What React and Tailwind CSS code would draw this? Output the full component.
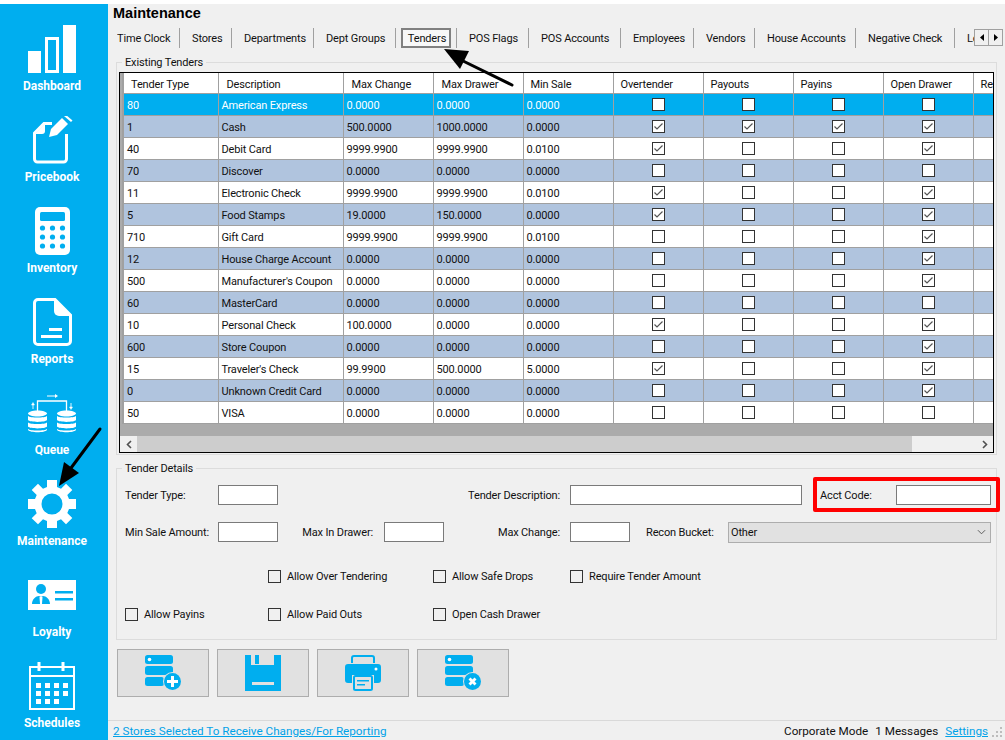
import React from "react";

const tabs = [
  { label: "Time Clock", w: "w-[63px]", pl: "pl-[0px]" },
  { label: "Stores", w: "w-[52px]", pl: "pl-[12px]" },
  { label: "Departments", w: "w-[82px]", pl: "pl-[12px]" },
  { label: "Dept Groups", w: "w-[82px]", pl: "pl-[12px]" },
  { label: "Tenders", w: "w-[61px]", active: true },
  { label: "POS Flags", w: "w-[72px]", pl: "pl-[12px]" },
  { label: "POS Accounts", w: "w-[92px]", pl: "pl-[12px]" },
  { label: "Employees", w: "w-[73px]", pl: "pl-[12px]" },
  { label: "Vendors", w: "w-[61px]", pl: "pl-[12px]" },
  { label: "House Accounts", w: "w-[101px]", pl: "pl-[12px]" },
  { label: "Negative Check", w: "w-[99px]", pl: "pl-[12px]" },
  { label: "Loyalty", w: "w-[50px]", pl: "pl-[12px]", last: true },
];

// type, description, max change, max drawer, min sale, overtender, payouts, payins, open drawer
const rows = [
  ["80", "American Express", "0.0000", "0.0000", "0.0000", 0, 0, 0, 0],
  ["1", "Cash", "500.0000", "1000.0000", "0.0000", 1, 1, 1, 1],
  ["40", "Debit Card", "9999.9900", "9999.9900", "0.0100", 1, 0, 0, 1],
  ["70", "Discover", "0.0000", "0.0000", "0.0000", 0, 0, 0, 0],
  ["11", "Electronic Check", "9999.9900", "9999.9900", "0.0100", 1, 0, 0, 1],
  ["5", "Food Stamps", "19.0000", "150.0000", "0.0000", 1, 0, 0, 1],
  ["710", "Gift Card", "9999.9900", "9999.9900", "0.0100", 0, 0, 0, 1],
  ["12", "House Charge Account", "0.0000", "0.0000", "0.0000", 0, 0, 0, 1],
  ["500", "Manufacturer's Coupon", "0.0000", "0.0000", "0.0000", 0, 0, 0, 1],
  ["60", "MasterCard", "0.0000", "0.0000", "0.0000", 0, 0, 0, 0],
  ["10", "Personal Check", "100.0000", "0.0000", "0.0000", 1, 0, 0, 1],
  ["600", "Store Coupon", "0.0000", "0.0000", "0.0000", 0, 0, 0, 1],
  ["15", "Traveler's Check", "99.9900", "500.0000", "5.0000", 1, 0, 0, 1],
  ["0", "Unknown Credit Card", "0.0000", "0.0000", "0.0000", 0, 0, 0, 1],
  ["50", "VISA", "0.0000", "0.0000", "0.0000", 0, 0, 0, 0],
];

const headers = [
  { label: "Tender Type", w: "w-[95px]", pl: "pl-[7px]" },
  { label: "Description", w: "w-[125px]", pl: "pl-[8px]" },
  { label: "Max Change", w: "w-[90px]", pl: "pl-[8px]" },
  { label: "Max Drawer", w: "w-[90px]", pl: "pl-[8px]" },
  { label: "Min Sale", w: "w-[90px]", pl: "pl-[7px]" },
  { label: "Overtender", w: "w-[90px]", pl: "pl-[7px]" },
  { label: "Payouts", w: "w-[90px]", pl: "pl-[7px]" },
  { label: "Payins", w: "w-[90px]", pl: "pl-[7px]" },
  { label: "Open Drawer", w: "w-[90px]", pl: "pl-[7px]" },
  { label: "Re", w: "w-[90px]", pl: "pl-[7px]" },
];

const DashboardIcon = () => (
  <svg viewBox="0 0 48 48" className="w-12 h-12" fill="#fff">
    <rect x="0" y="26" width="13" height="22" />
    <path fillRule="evenodd" d="M17 12h14v36H17z M20 15v30h8V15z" />
    <rect x="35" y="0" width="13" height="48" />
  </svg>
);

const PricebookIcon = () => (
  <svg viewBox="0 0 48 48" className="w-12 h-12" fill="none">
    <path d="M24 7.500H16L6.500 17v26a3 3 0 0 0 3 3h26a3 3 0 0 0 3-3V18" stroke="#fff" strokeWidth="3" />
    <path d="M7 18h7a3 3 0 0 0 3-3V8z" fill="#fff" />
    <path d="M21 21l2-8 11-11 6 6-11 11z" fill="#fff" />
    <path d="M36 0l1.500-1.500 7 6L43 6z" fill="#fff" />
  </svg>
);

const InventoryIcon = () => (
  <svg viewBox="0 0 48 48" className="w-12 h-12" fill="#fff">
    <rect x="7" y="0" width="35" height="48" rx="5" />
    <rect x="12" y="5" width="25" height="9" rx="1.5" fill="#00aeef" />
    {[21, 30, 39].map((y) =>
      [14.5, 24.5, 34.5].map((x) => <circle key={x + "-" + y} cx={x} cy={y} r="2.6" fill="#00aeef" />)
    )}
  </svg>
);

const ReportsIcon = () => (
  <svg viewBox="0 0 48 48" className="w-12 h-12" fill="none">
    <path d="M10 1.500h17l15.500 15.500V43a3.500 3.500 0 0 1-3.500 3.500H10A3.500 3.500 0 0 1 6.500 43V5A3.500 3.500 0 0 1 10 1.500z" stroke="#fff" strokeWidth="3" />
    <path d="M26 1l17 17H31a5 5 0 0 1-5-5z" fill="#fff" />
    <path d="M21 30h13v3H21zM13 37h21v3H13z" fill="#fff" />
  </svg>
);

const QueueIcon = () => (
  <svg viewBox="0 0 48 48" className="w-12 h-12" fill="none">
    <path d="M9.500 24V12h29v12" stroke="#fff" strokeWidth="1.300" />
    <path d="M19 7h8" stroke="#fff" strokeWidth="1" />
    <path d="M27 5l3 2-3 2z" fill="#fff" />
    <path d="M5 20v-4l-1.500 0 1.500-2.500 1.500 2.500-1.500 0zM43 14v4l1.500 0-1.500 2.500-1.500-2.500 1.500 0z" fill="#fff" stroke="#fff" strokeWidth="0.5" />
    {[9.5, 38.5].map((cx) => (
      <g key={cx} fill="#fff">
        <path d={`M${cx - 9.500} 24.500c0-1.500 4-3 9.500-3s9.500 1.500 9.500 3-4 3-9.500 3-9.500-1.500-9.500-3z`} />
        <path d={`M${cx - 9.500} 27c2 2 17 2 19 0v4c-2 2.500-17 2.500-19 0z`} />
        <path d={`M${cx - 9.500} 33.500c2 2 17 2 19 0v4c-2 2.500-17 2.500-19 0z`} />
        <path d={`M${cx - 9.500} 40c2 2 17 2 19 0v1c-2 3-17 3-19 0z`} />
      </g>
    ))}
  </svg>
);

const GearIcon = () => (
  <svg viewBox="0 0 48 48" className="w-12 h-12" fill="#fff">
    <path
      fillRule="evenodd"
      d="M19 0h10v7l4 1.700 5-5 6.300 6.300-5 5 1.700 4h7v10h-7l-1.700 4 5 5-6.300 6.300-5-5-4 1.700v7H19v-7l-4-1.700-5 5L3.700 38.200l5-5L7 29H0V19h7l1.700-4-5-5L10 3.700l5 5 4-1.700z M24 13.500a10.500 10.500 0 1 0 0 21a10.500 10.500 0 1 0 0-21z"
    />
  </svg>
);

const LoyaltyIcon = () => (
  <svg viewBox="0 0 48 48" className="w-12 h-12">
    <rect x="0" y="9" width="48" height="30" fill="#fff" />
    <circle cx="13" cy="18" r="5" fill="#00aeef" />
    <path d="M4 33c0-5 4-8 7-8l2 1 2-1c3 0 7 3 7 8z" fill="#00aeef" />
    <path d="M11.500 26h3l-.5 7h-2z" fill="#fff" />
    <path d="M27 20h18v2.500H27zM27 27h18v2.500H27z" fill="#00aeef" />
  </svg>
);

const SchedulesIcon = () => (
  <svg viewBox="0 0 48 48" className="w-12 h-12" fill="none">
    <rect x="2" y="5" width="44" height="42" stroke="#fff" strokeWidth="2" />
    <path d="M2 14h44" stroke="#fff" strokeWidth="2" />
    <path d="M11 0v9M35 0v9" stroke="#fff" strokeWidth="3" />
    {[21, 29, 37].map((y, r) =>
      [8, 17, 26, 35].slice(0, r === 2 ? 3 : 4).map((x) => <rect key={x + "-" + y} x={x} y={y} width="5" height="5" fill="#fff" />)
    )}
  </svg>
);

const nav = [
  ["Dashboard", DashboardIcon],
  ["Pricebook", PricebookIcon],
  ["Inventory", InventoryIcon],
  ["Reports", ReportsIcon],
  ["Queue", QueueIcon],
  ["Maintenance", GearIcon],
  ["Loyalty", LoyaltyIcon],
  ["Schedules", SchedulesIcon],
];

function CheckBox({ checked, box = "border-[#333] bg-white" }) {
  return (
    <span className={`inline-flex w-[13px] h-[13px] border ${box} items-center justify-center`}>
      {checked ? (
        <svg viewBox="0 0 11 11" className="w-[11px] h-[11px]" fill="none">
          <path d="M1.500 5.500l2.500 2.500 5.500-5.500" stroke="#555" strokeWidth="1.200" />
        </svg>
      ) : null}
    </span>
  );
}

function FormCheck({ label, w }) {
  return (
    <label className={`${w} flex items-center gap-[6px] shrink-0`}>
      <CheckBox box="border-[#333] bg-transparent" />
      <span className="whitespace-nowrap pt-[2px]">{label}</span>
    </label>
  );
}

function TextBox({ w }) {
  return <div className={`${w} h-[20px] bg-white border border-[#7a7a7a] shrink-0`} />;
}

function ToolButton({ children }) {
  return (
    <button className="w-[92px] h-[48px] bg-[#e1e1e1] border border-[#adadad] flex items-center justify-center">
      {children}
    </button>
  );
}

export default function App() {
  return (
    <div className="[font-family:Roboto,sans-serif] w-[1005px] h-[740px] overflow-hidden bg-white text-[11px] tracking-[-0.15px] text-[#111] relative">
      <div className="h-[4px] bg-white" />
      <div className="flex h-[736px]">
        {/* Side nav */}
        <nav className="w-[108px] shrink-0 bg-[#00aeef] pr-[4px] flex flex-col items-center">
          {nav.map(([label, Icon]) => (
            <div key={label} className="h-[91px] shrink-0 pt-[21px] flex flex-col items-center">
              <Icon />
              <span className="mt-[5px] h-[16px] leading-[16px] text-[12px] tracking-normal font-bold text-white whitespace-nowrap">{label}</span>
            </div>
          ))}
        </nav>

        <main className="flex-1 min-w-0 bg-[#f0f0f0] flex flex-col">
          <h1 className="[font-family:Liberation_Sans,sans-serif] h-[18px] leading-[18px] pl-[5px] text-[14.5px] tracking-normal font-bold text-black">Maintenance</h1>

          {/* Tabs */}
          <div className="relative mt-[6px] ml-[9px] h-[20px] overflow-hidden flex">
            {tabs.map((t) => (
              <div
                key={t.label}
                className={
                  t.active
                    ? `${t.w} shrink-0 flex`
                    : `${t.w} ${t.pl} shrink-0 whitespace-nowrap leading-[22px] ${t.last ? "" : "border-r border-[#a0a0a0]"}`
                }
              >
                {t.active ? (
                  <>
                    <span className="ml-[5px] w-[50px] h-[20px] pl-[2px] text-center leading-[18px] border-2 border-[#808080] bg-[#f8f8f8]">
                      {t.label}
                    </span>
                    <span className="ml-auto border-r border-[#a0a0a0]" />
                  </>
                ) : (
                  t.label
                )}
              </div>
            ))}
            <div className="absolute right-[2px] top-[1px] h-[17px] w-[29px] flex border border-[#a0a0a0] bg-[#f0f0f0]">
              <span className="flex-1 flex items-center justify-center border-r border-[#a0a0a0]">
                <svg viewBox="0 0 4 7" className="w-[4px] h-[7px]"><path d="M4 0v7L0 3.500z" fill="#000" /></svg>
              </span>
              <span className="flex-1 flex items-center justify-center">
                <svg viewBox="0 0 4 7" className="w-[4px] h-[7px]"><path d="M0 0v7l4-3.500z" fill="#000" /></svg>
              </span>
            </div>
          </div>

          {/* Existing Tenders */}
          <fieldset className="mt-[6px] ml-[8px] w-[881px] h-[401px] border border-[#dcdcdc] px-[2px] min-w-0">
            <legend className="ml-[3px] px-[3px] leading-[18px] h-[16px]">Existing Tenders</legend>
            <div className="mt-[2px] h-[381px] border border-black bg-[#ababab] flex flex-col overflow-hidden">
              <div className="flex-1 overflow-hidden pl-[2px]">
                <table className="table-fixed border-collapse w-[940px] border-l-2 border-[#a0a0a0]">
                  <colgroup>
                    {headers.map((h) => <col key={h.label} className={h.w} />)}
                  </colgroup>
                  <thead>
                    <tr className="h-[20px] bg-white">
                      {headers.map((h) => (
                        <th key={h.label} className={`${h.pl} font-normal text-left whitespace-nowrap overflow-hidden border-r border-b border-[#a0a0a0] p-0 pt-[4px] leading-[15px]`}>
                          {h.label}
                        </th>
                      ))}
                    </tr>
                  </thead>
                  <tbody>
                    {rows.map((r, i) => {
                      const rowBg = i === 0 ? "bg-[#00aeef] text-white" : i % 2 ? "bg-[#b0c4de]" : "bg-white";
                      return (
                        <tr key={r[0]} className={`h-[22px] ${rowBg}`}>
                          {r.slice(0, 5).map((v, c) => (
                            <td key={c} className="whitespace-nowrap overflow-hidden border-r border-b border-[#a0a0a0] p-0 pl-[3px] pt-[2px] leading-[19px]">{v}</td>
                          ))}
                          {r.slice(5).map((v, c) => (
                            <td key={c} className="text-center border-r border-b border-[#a0a0a0] p-0 leading-[0]">
                              <CheckBox checked={!!v} />
                            </td>
                          ))}
                          <td className="border-r border-b border-[#a0a0a0] p-0" />
                        </tr>
                      );
                    })}
                  </tbody>
                </table>
              </div>
              {/* Horizontal scrollbar */}
              <div className="h-[16px] mt-[1px] bg-[#f0f0f0] flex items-center">
                <span className="w-[17px] flex justify-center">
                  <svg viewBox="0 0 6 9" className="w-[6px] h-[9px]" fill="none"><path d="M5 1L1.500 4.500 5 8" stroke="#505050" strokeWidth="1.600" /></svg>
                </span>
                <div className="w-[775px] h-full bg-[#cdcdcd]" />
                <span className="ml-auto w-[17px] flex justify-center">
                  <svg viewBox="0 0 6 9" className="w-[6px] h-[9px]" fill="none"><path d="M1 1l3.500 3.500L1 8" stroke="#505050" strokeWidth="1.600" /></svg>
                </span>
              </div>
            </div>
          </fieldset>

          {/* Tender Details */}
          <fieldset className="mt-[5px] ml-[8px] w-[881px] h-[180px] border border-[#dcdcdc] pl-[8px] min-w-0">
            <legend className="ml-[-3px] px-[3px] leading-[18px] h-[16px]">Tender Details</legend>
            <div className="mt-[9px] flex items-center h-[20px]">
              <span className="w-[93px] shrink-0 pt-[2px]">Tender Type:</span>
              <TextBox w="w-[60px]" />
              <span className="w-[292px] shrink-0 text-right pr-[10px] pt-[2px]">Tender Description:</span>
              <TextBox w="w-[232px]" />
              <span className="ml-[18px] w-[76px] shrink-0 pt-[2px]">Acct Code:</span>
              <TextBox w="w-[95px]" />
            </div>
            <div className="mt-[17px] flex items-center h-[20px]">
              <span className="w-[93px] shrink-0 whitespace-nowrap pt-[2px]">Min Sale Amount:</span>
              <TextBox w="w-[60px]" />
              <span className="w-[106px] shrink-0 text-right pr-[11px] whitespace-nowrap pt-[2px]">Max In Drawer:</span>
              <TextBox w="w-[60px]" />
              <span className="w-[126px] shrink-0 text-right pr-[10px] pt-[2px]">Max Change:</span>
              <TextBox w="w-[60px]" />
              <span className="ml-[16px] w-[82px] shrink-0 whitespace-nowrap pt-[2px]">Recon Bucket:</span>
              <div className="w-[263px] h-[21px] bg-[#e1e1e1] border border-[#adadad] flex items-center justify-between pl-[2px] pr-[4px]">
                <span className="pt-[2px]">Other</span>
                <svg viewBox="0 0 10 6" className="w-[9px] h-[6px]" fill="none"><path d="M1 1l4 4 4-4" stroke="#505050" /></svg>
              </div>
            </div>
            <div className="mt-[24px] pl-[143px] flex items-center h-[20px]">
              <FormCheck label="Allow Over Tendering" w="w-[165px]" />
              <FormCheck label="Allow Safe Drops" w="w-[137px]" />
              <FormCheck label="Require Tender Amount" w="w-[150px]" />
            </div>
            <div className="mt-[18px] flex items-center h-[20px]">
              <FormCheck label="Allow Payins" w="w-[143px]" />
              <FormCheck label="Allow Paid Outs" w="w-[165px]" />
              <FormCheck label="Open Cash Drawer" w="w-[137px]" />
            </div>
          </fieldset>

          {/* Toolbar */}
          <div className="mt-[9px] ml-[9px] flex gap-[8px]">
            <ToolButton>
              <svg viewBox="0 0 36 36" className="w-[36px] h-[36px]" fill="#00aeef">
                <rect x="0" y="0" width="28" height="9" rx="2.500" />
                <rect x="0" y="11" width="28" height="9" rx="2.500" />
                <rect x="0" y="22" width="19" height="9" rx="2.500" />
                <circle cx="4.500" cy="4.500" r="1.800" fill="#fff" />
                <circle cx="27.500" cy="26.500" r="9.500" fill="#e1e1e1" />
                <circle cx="27.500" cy="26.500" r="8.500" />
                <path d="M26 21h3v4h4v3h-4v4h-3v-4h-4v-3h4z" fill="#fff" />
              </svg>
            </ToolButton>
            <ToolButton>
              <svg viewBox="0 0 36 36" className="w-[36px] h-[36px]" fill="#00aeef">
                <path fillRule="evenodd" d="M0 0h36v36H0z M6 0v10h23V0h-15v9h-4V0z M7 27v3h22v-3z" />
              </svg>
            </ToolButton>
            <ToolButton>
              <svg viewBox="0 0 36 36" className="w-[36px] h-[36px]" fill="#00aeef">
                <path d="M7 8V3a2 2 0 0 1 2-2h18a2 2 0 0 1 2 2v5" fill="none" stroke="#00aeef" strokeWidth="2" />
                <path d="M3 9h30a3 3 0 0 1 3 3v13a3 3 0 0 1-3 3h-4v-8H7v8H3a3 3 0 0 1-3-3V12a3 3 0 0 1 3-3z" />
                <circle cx="31" cy="14" r="1.500" fill="#fff" />
                <rect x="9" y="21" width="18" height="14" rx="1.500" fill="none" stroke="#00aeef" strokeWidth="2" />
                <path d="M12 25h12v1.500H12zM12 29h8v1.500h-8z" />
              </svg>
            </ToolButton>
            <ToolButton>
              <svg viewBox="0 0 36 36" className="w-[36px] h-[36px]" fill="#00aeef">
                <rect x="0" y="0" width="28" height="9" rx="2.500" />
                <rect x="0" y="11" width="28" height="9" rx="2.500" />
                <rect x="0" y="22" width="19" height="9" rx="2.500" />
                <circle cx="4.500" cy="4.500" r="1.800" fill="#fff" />
                <circle cx="27.500" cy="26.500" r="9.500" fill="#e1e1e1" />
                <circle cx="27.500" cy="26.500" r="8.500" />
                <path d="M23.500 24.500l2 2-2 2 2 2 2-2 2 2 2-2-2-2 2-2-2-2-2 2-2-2z" fill="#fff" />
              </svg>
            </ToolButton>
          </div>

          {/* Status bar */}
          <footer className="mt-auto h-[20px] border-t border-[#d9d9d9] flex items-center pl-[5px] pr-[2px] pt-[2px] text-[11.7px] tracking-normal">
            <a className="text-[#00a2e8] underline whitespace-nowrap">2 Stores Selected To Receive Changes/For Reporting</a>
            <span className="ml-auto whitespace-nowrap">Corporate Mode</span>
            <span className="ml-[7px] whitespace-nowrap">1 Messages</span>
            <a className="ml-[7px] text-[#00a2e8] underline">Settings</a>
            <svg viewBox="0 0 11 11" className="ml-[4px] w-[11px] h-[11px]" fill="#bdbdbd">
              <path d="M8 1h2v2H8zM4 5h2v2H4zM8 5h2v2H8zM0 9h2v2H0zM4 9h2v2H4zM8 9h2v2H8z" />
            </svg>
          </footer>
        </main>
      </div>

      {/* Annotations over the screenshot */}
      <div className="absolute left-[813px] top-[477px] w-[187px] h-[35px] border-4 border-[#f00] rounded-[2px]" />
      <svg className="absolute left-0 top-0 w-[1005px] h-[740px] pointer-events-none" viewBox="0 0 1005 740" fill="none">
        <path d="M512 85L459 59" stroke="#000" strokeWidth="3" strokeLinecap="round" />
        <path d="M444 49l25 2-9 18z" fill="#000" />
        <path d="M100 429L71 468" stroke="#000" strokeWidth="3" strokeLinecap="round" />
        <path d="M59 486l5-24 15 11z" fill="#000" />
      </svg>
    </div>
  );
}
